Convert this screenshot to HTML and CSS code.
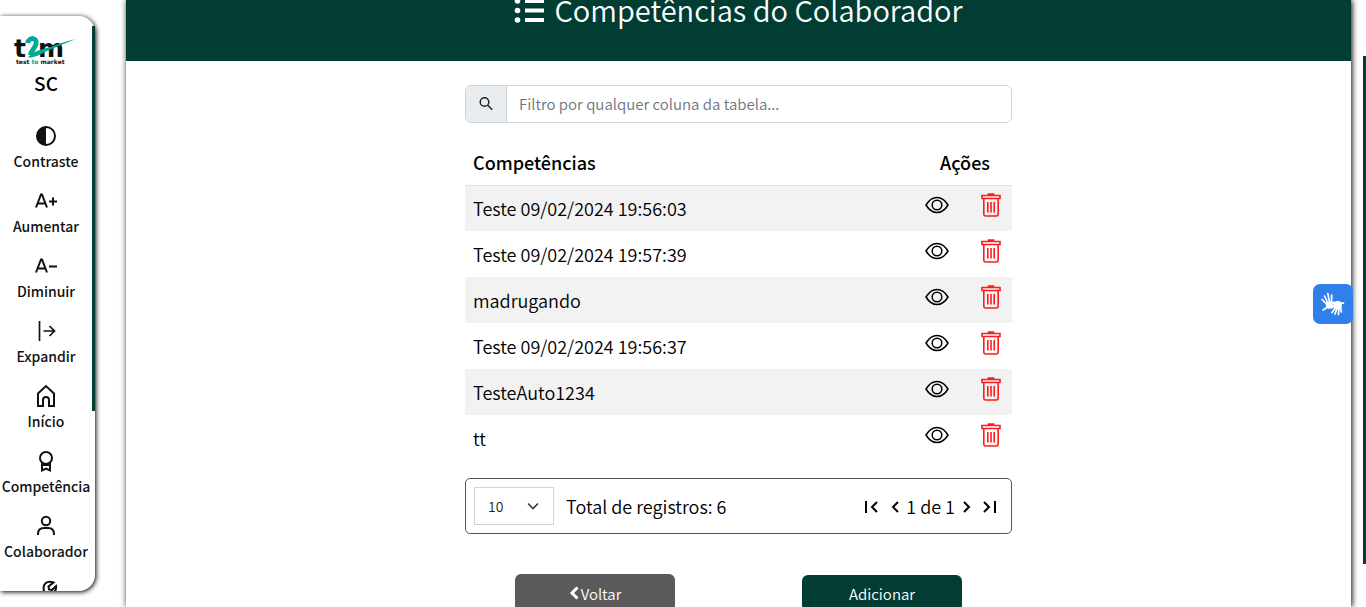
FILE: index.html
```html
<!DOCTYPE html>
<html lang="pt-BR">
<head>
<meta charset="utf-8">
<title>Competências do Colaborador</title>
<meta name="viewport" content="width=device-width, initial-scale=1">
<link rel="stylesheet" href="styles.css">
</head>
<body>
<svg class="sprite" aria-hidden="true">
  <symbol id="eye" viewBox="0 0 24 18"><path d="M1 9C4 4 7.800 1.500 12 1.500S20 4 23 9c-3 5-6.800 7.500-11 7.500S4 14 1 9Z"/><circle cx="12" cy="9" r="4.800"/></symbol>
  <symbol id="trash" viewBox="0 0 20 24"><path d="M7.500 2V1h5v1M1 2.500h18v3H1zM2.800 5.500V21q0 2 2 2h10.400q2 0 2-2V5.500M6.800 9v10.500M10 9v10.500M13.200 9v10.500"/></symbol>
</svg>
<div class="page">
  <nav class="sidebar" aria-label="Menu principal">
    <div class="sidebar-scroll">
      <svg class="logo" viewBox="0 0 64 30" role="img" aria-label="t2m test to market">
        <text x="1" y="21" class="logo-main">t</text>
        <text x="25" y="21" class="logo-main">m</text>
        <path class="logo-two" d="M14.500 7C16 1 24.500 1 23 8c-1 4-5 7-5.500 11"/>
        <path class="logo-swoosh" d="M15 21.500C20 15 30 13 38 11c10-4 17-6 25-8-13 5-20 8-29 12-8 4-13 7-19 6.500Z"/>
        <text x="3" y="28" class="logo-sub">test <tspan class="logo-to">to</tspan> market</text>
      </svg>
      <div class="initials">SC</div>
      <ul class="menu">
        <li><button type="button" class="item"><svg class="ico" viewBox="0 0 26 26"><circle cx="13" cy="13" r="9"/><path class="solid" d="M13 4a9 9 0 0 0 0 18Z"/></svg><span>Contraste</span></button></li>
        <li><button type="button" class="item"><svg class="ico" viewBox="0 0 26 26"><path d="M3 19.500 8 6.500h1l5 13M5 15.500h7M16 13.500h8M20 9.500v8"/></svg><span>Aumentar</span></button></li>
        <li><button type="button" class="item"><svg class="ico" viewBox="0 0 26 26"><path d="M3 19.500 8 6.500h1l5 13M5 15.500h7M16 13.500h8"/></svg><span>Diminuir</span></button></li>
        <li><button type="button" class="item"><svg class="ico thin" viewBox="0 0 26 26"><path d="M6.500 3v20M10.500 13H21M16.500 8l5 5-5 5"/></svg><span>Expandir</span></button></li>
        <li><a href="#" class="item"><svg class="ico" viewBox="0 0 26 26"><path d="M5 23V10.500L13 3l8 7.500V23h-5v-6q0-3-3-3t-3 3v6Z"/></svg><span>Início</span></a></li>
        <li><a href="#" class="item"><svg class="ico" viewBox="0 0 26 26"><circle cx="13" cy="10" r="6"/><path d="M9 15v7.500l4-2 4 2V15M9 17h8"/></svg><span>Competência</span></a></li>
        <li><a href="#" class="item"><svg class="ico" viewBox="0 0 26 26"><circle cx="13" cy="8" r="4.200"/><path d="M5 22v-1q0-6 6-6h4q6 0 6 6v1"/></svg><span>Colaborador</span></a></li>
        <li><a href="#" class="item" aria-label="Ferramentas"><svg class="ico" viewBox="0 0 26 26"><path d="M11 13c-2-7 3-11 9.500-8.500L15.500 8.500l.5 3 3 .5 4-4c1 6-4 8-8 7l-6 6-3-3Z"/></svg></a></li>
      </ul>
    </div>
    <span class="thumb"></span>
  </nav>

  <main class="main">
    <header class="banner">
      <h1><svg class="list-ico" viewBox="0 0 32 26"><path d="M11 3h19M11 12.500h19M11 22h19"/><circle cx="3.500" cy="3" r="2.800"/><circle cx="3.500" cy="12.500" r="2.800"/><circle cx="3.500" cy="22" r="2.800"/></svg>Competências do Colaborador</h1>
    </header>
    <section class="content">
      <div class="filter">
        <label for="filter" aria-label="Filtrar"><svg viewBox="0 0 16 16"><circle cx="6.500" cy="6" r="4.300"/><path d="m9.700 9.200 4.600 4.600"/></svg></label>
        <input id="filter" type="text" placeholder="Filtro por qualquer coluna da tabela...">
      </div>
      <table class="grid">
        <thead><tr><th scope="col">Competências</th><th scope="col" class="actions">Ações</th></tr></thead>
        <tbody>
          <tr><td>Teste 09/02/2024 19:56:03</td><td><div class="acts"><button type="button" aria-label="Visualizar"><svg class="eye"><use href="#eye"/></svg></button><button type="button" aria-label="Excluir"><svg class="trash"><use href="#trash"/></svg></button></div></td></tr>
          <tr><td>Teste 09/02/2024 19:57:39</td><td><div class="acts"><button type="button" aria-label="Visualizar"><svg class="eye"><use href="#eye"/></svg></button><button type="button" aria-label="Excluir"><svg class="trash"><use href="#trash"/></svg></button></div></td></tr>
          <tr><td>madrugando</td><td><div class="acts"><button type="button" aria-label="Visualizar"><svg class="eye"><use href="#eye"/></svg></button><button type="button" aria-label="Excluir"><svg class="trash"><use href="#trash"/></svg></button></div></td></tr>
          <tr><td>Teste 09/02/2024 19:56:37</td><td><div class="acts"><button type="button" aria-label="Visualizar"><svg class="eye"><use href="#eye"/></svg></button><button type="button" aria-label="Excluir"><svg class="trash"><use href="#trash"/></svg></button></div></td></tr>
          <tr><td>TesteAuto1234</td><td><div class="acts"><button type="button" aria-label="Visualizar"><svg class="eye"><use href="#eye"/></svg></button><button type="button" aria-label="Excluir"><svg class="trash"><use href="#trash"/></svg></button></div></td></tr>
          <tr><td>tt</td><td><div class="acts"><button type="button" aria-label="Visualizar"><svg class="eye"><use href="#eye"/></svg></button><button type="button" aria-label="Excluir"><svg class="trash"><use href="#trash"/></svg></button></div></td></tr>
        </tbody>
      </table>
      <div class="pager">
        <div class="size">
          <select aria-label="Registros por página"><option>10</option><option>25</option></select>
          <svg viewBox="0 0 12 8"><path d="m1 1.500 5 5 5-5"/></svg>
        </div>
        <span class="total">Total de registros: 6</span>
        <div class="nav">
          <button type="button" class="first" aria-label="Primeira página"><svg viewBox="0 0 14 14"><path d="M2 1v12M13 2 8 7l5 5"/></svg></button>
          <button type="button" aria-label="Página anterior"><svg viewBox="0 0 14 14"><path d="M10 2 5 7l5 5"/></svg></button>
          <span>1 de 1</span>
          <button type="button" aria-label="Próxima página"><svg viewBox="0 0 14 14"><path d="m5 2 5 5-5 5"/></svg></button>
          <button type="button" class="last" aria-label="Última página"><svg viewBox="0 0 14 14"><path d="M12 1v12M1 2l5 5-5 5"/></svg></button>
        </div>
      </div>
      <div class="buttons">
        <button type="button" class="btn back"><svg viewBox="0 0 10 14"><path d="M8.500 1.500 3 7l5.500 5.500"/></svg>Voltar</button>
        <button type="button" class="btn add">Adicionar</button>
      </div>
    </section>
  </main>
  <span class="page-thumb"></span>
  <button type="button" class="libras" aria-label="Conteúdo acessível em Libras">
    <svg viewBox="0 0 28 28"><path class="fingers" d="M7.500 14 3 9.500M8.500 12.500 5.500 6M10.500 12 8.800 3.500M12.500 12.500 12.700 5M8 17.500l-4 2.500M13 14l2-2M17 17l-4 5.500M18.500 17l-2.500 7M20 17l-.5 7.500M21.500 16l.8 6M16 13.500l-4.500.5M21 13l3.500.2"/><path class="palm" d="m7 12.500 5.500-1.500 1.500 4 1.500 1-2 2.500-4.500.3q-3-2-2-6.300Zm7.500 1q3-4.500 7.500-1.500l1 3-1.500 4-5 .5-2-2Z"/></svg>
  </button>
</div>
</body>
</html>
```

FILE: styles.css
```css
* { box-sizing: border-box; }
body {
  margin: 0;
  background: #fff;
  color: #000;
  font-family: "Noto Sans CJK JP", "Noto Sans", sans-serif;
  overflow: hidden;
}
button { font: inherit; color: inherit; border: 0; background: none; padding: 0; cursor: pointer; }
svg { display: block; fill: none; stroke: currentColor; }
.sprite { position: absolute; width: 0; height: 0; }
.page { position: relative; display: flex; gap: 31px; height: 100vh; padding-right: 15px; }

.sidebar {
  position: relative;
  flex: 0 0 95px;
  min-width: 0;
  margin: 16px 0;
  border-radius: 0 16px 16px 0;
  box-shadow: 1px 1px 5px #000;
}
.sidebar-scroll { height: 100%; overflow: hidden; padding: 20px 3px 0 0; border-radius: inherit; }
.thumb { position: absolute; top: 10px; right: 0; width: 3px; height: 385px; background: #013d33; }
.logo { width: 64px; height: 30px; margin-left: 13px; stroke: none; overflow: visible; }
.logo-main { font: bold 25px "DejaVu Sans", sans-serif; fill: #111; }
.logo-sub { font: bold 6px "DejaVu Sans", sans-serif; fill: #111; }
.logo-to, .logo-swoosh { fill: #00a896; }
.logo-two { stroke: #00a896; stroke-width: 5; }
.initials { text-align: center; font-size: 19px; line-height: 34px; font-weight: 500; }
.menu { list-style: none; margin: 23px 0 0; padding: 0; }
.item {
  display: flex;
  flex-direction: column;
  align-items: center;
  justify-content: flex-start;
  width: 100%;
  height: 65px;
  color: #111;
  text-decoration: none;
  font-size: 14px;
  line-height: 24px;
  font-weight: 500;
}
.ico { width: 26px; height: 26px; stroke-width: 2; flex: none; }
.ico.thin { stroke-width: 1.700; }
.solid { fill: currentColor; stroke: none; }

.main { flex: 1; min-width: 0; box-shadow: 1px 0 6px #000; }
.banner { background: #013d33; color: #fff; padding-bottom: 43px; }
.banner h1 {
  display: flex;
  justify-content: center;
  align-items: center;
  gap: 8px;
  height: 18px;
  margin: 0;
  font-size: 29px;
  line-height: 18px;
  font-weight: 350;
}
.list-ico { width: 32px; height: 26px; margin-top: 4px; stroke-width: 4; }
.list-ico circle { fill: currentColor; stroke: none; }
.content { width: 547px; max-width: 100%; margin: 0 auto; padding-top: 24px; }

.filter { display: flex; height: 38px; border: 1px solid #ced4da; border-radius: 6px; overflow: hidden; }
.filter label { display: grid; place-items: center; width: 41px; background: #e9ecef; border-right: 1px solid #ced4da; }
.filter svg { width: 16px; height: 16px; stroke: #212529; stroke-width: 1.500; }
.filter input { flex: 1; min-width: 0; border: 0; padding: 0 12px 2px; font: 350 15px "Noto Sans CJK JP", sans-serif; }
.filter input::placeholder { color: #6c757d; opacity: 1; }

.grid { width: 100%; margin-top: 16px; border-collapse: collapse; font-size: 18px; line-height: 30px; }
.grid th { height: 46px; padding: 0 8px; text-align: left; font-weight: 500; border-bottom: 1px solid #dee2e6; }
.grid th.actions { width: 94px; text-align: center; padding: 0; }
.grid td { height: 46px; padding: 0 8px; font-weight: 350; }
.grid td:last-child { padding: 0; }
.grid tbody tr:nth-child(odd) { background: #f2f2f2; }
.acts { display: flex; justify-content: space-between; align-items: center; padding: 0 11px 6px 7px; }
.eye { width: 24px; height: 18px; stroke-width: 1.500; }
.trash { width: 20px; height: 24px; color: #fb1d1d; stroke-width: 1.600; }

.pager {
  display: flex;
  align-items: center;
  height: 56px;
  margin-top: 17px;
  padding: 0 8px;
  border: 1px solid #555;
  border-radius: 5px;
  font-size: 18px;
  font-weight: 350;
}
.size { display: grid; align-items: center; width: 80px; height: 38px; }
.size select {
  grid-area: 1 / 1;
  width: 100%;
  height: 38px;
  padding: 0 13px;
  border: 1px solid #ced4da;
  background: #fff;
  appearance: none;
  font: 350 14px "Noto Sans CJK JP", sans-serif;
  color: #212529;
}
.size svg { grid-area: 1 / 1; justify-self: end; width: 12px; height: 8px; margin-right: 15px; stroke: #343a40; stroke-width: 1.600; pointer-events: none; }
.total { margin-left: 12px; }
.nav { display: flex; align-items: center; gap: 4px; margin-left: auto; margin-right: 6px; }
.nav button { padding-top: 2px; }
.nav .first { margin-right: 6px; }
.nav .last { margin-left: 6px; }
.nav button svg { width: 14px; height: 14px; stroke-width: 2; }

.buttons { display: flex; justify-content: space-between; align-items: center; margin-top: 40px; padding: 0 50px; }
.btn {
  display: flex;
  align-items: center;
  justify-content: center;
  gap: 2px;
  width: 160px;
  border-radius: 6px;
  color: #fff;
  font-size: 15px;
  font-weight: 350;
}
.btn svg { width: 10px; height: 14px; stroke-width: 3; }
.back { height: 38px; background: #5a5a5a; }
.add { height: 36px; background: #013d33; }

.page-thumb { position: absolute; right: 0; top: 56px; bottom: 43px; width: 3px; background: #013d33; }
.libras {
  position: absolute;
  right: 13px;
  top: 284px;
  display: grid;
  place-items: center;
  width: 40px;
  height: 40px;
  border-radius: 7px;
  background: #2f80ea;
  color: #fff;
}
.libras svg { width: 28px; height: 28px; }
.fingers { stroke-width: 1.700; stroke-linecap: round; }
.palm { fill: currentColor; stroke: none; }
```
